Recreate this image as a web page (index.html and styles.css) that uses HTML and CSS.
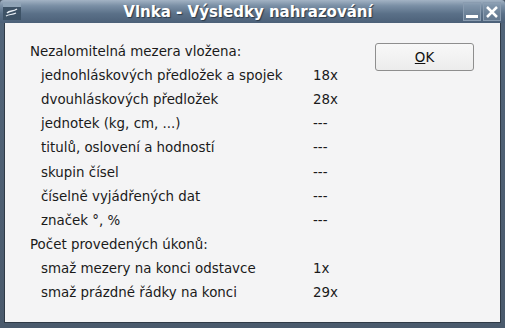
FILE: index.html
```html
<!DOCTYPE html>
<html lang="cs">
<head>
    <meta charset="UTF-8">
    <title>Vlnka - Výsledky nahrazování</title>
    <link rel="stylesheet" href="styles.css">
</head>
<body>
    <div class="window">
        <div class="titlebar">
            <div class="app-icon">
                <svg width="18" height="17" viewBox="0 0 18 17">
                    <rect x="0" y="0" width="18" height="17" fill="#3d5266"/>
                    <rect x="0" y="0" width="18" height="4" fill="#8fa3b6"/>
                    <path d="M4 10 C7 7 10 9 14 6" stroke="#e8eef4" stroke-width="1.5" fill="none"/>
                    <path d="M3 13 C6 11 9 12 13 10" stroke="#e8eef4" stroke-width="1.2" fill="none"/>
                </svg>
            </div>
            <div class="title">Vlnka - Výsledky nahrazování</div>
            <div class="win-buttons">
                <div class="win-btn">
                    <svg width="16" height="16" viewBox="0 0 16 16"><rect x="2" y="11" width="12" height="3" fill="#fff"/></svg>
                </div>
                <div class="win-btn">
                    <svg width="16" height="16" viewBox="0 0 16 16"><path d="M3 3 L13 13 M13 3 L3 13" stroke="#fff" stroke-width="2.5"/></svg>
                </div>
            </div>
        </div>
        <div class="content">
            <div class="results">
                <div class="row head">Nezalomitelná mezera vložena:</div>
                <div class="row"><span class="label">jednohláskových předložek a spojek</span><span class="value">18x</span></div>
                <div class="row"><span class="label">dvouhláskových předložek</span><span class="value">28x</span></div>
                <div class="row"><span class="label">jednotek (kg, cm, ...)</span><span class="value">---</span></div>
                <div class="row"><span class="label">titulů, oslovení a hodností</span><span class="value">---</span></div>
                <div class="row"><span class="label">skupin čísel</span><span class="value">---</span></div>
                <div class="row"><span class="label">číselně vyjádřených dat</span><span class="value">---</span></div>
                <div class="row"><span class="label">značek °, %</span><span class="value">---</span></div>
                <div class="row head">Počet provedených úkonů:</div>
                <div class="row"><span class="label">smaž mezery na konci odstavce</span><span class="value">1x</span></div>
                <div class="row"><span class="label">smaž prázdné řádky na konci</span><span class="value">29x</span></div>
            </div>
            <div class="side">
                <button class="ok-btn"><u>O</u>K</button>
            </div>
        </div>
    </div>
</body>
</html>
```

FILE: styles.css
```css
body {
    margin: 0;
    width: 505px;
    height: 328px;
    overflow: hidden;
    font-family: 'DejaVu Sans', Verdana, sans-serif;
    background: #4b5868;
}
.window {
    display: flex;
    flex-direction: column;
    height: 328px;
    box-sizing: border-box;
    padding: 0 4px 5px 4px;
    background: linear-gradient(to bottom, #52657a 0%, #4a5a6c 100%);
    border-radius: 4px 4px 0 0;
}
.titlebar {
    height: 23px;
    display: flex;
    align-items: center;
    margin: 0 -4px;
    padding: 0 4px 0 3px;
    background: linear-gradient(to bottom, #a3b3c4 0%, #7a8fa5 25%, #5a7088 60%, #4c6078 100%);
    border-radius: 4px 4px 0 0;
}
.app-icon {
    width: 18px;
    height: 17px;
    margin-top: -1px;
}
.title {
    flex: 1;
    text-align: center;
    color: #fff;
    font-weight: bold;
    font-size: 15px;
    text-shadow: 1px 1px 1px #2c3a48;
    padding-left: 12px;
}
.win-buttons {
    display: flex;
    gap: 2px;
}
.win-btn {
    width: 16px;
    height: 17px;
    border: 1px solid #8a9cb0;
    background: rgba(140,160,180,0.35);
    display: flex;
    align-items: center;
    justify-content: center;
}
.content {
    flex: 1;
    display: flex;
    background: #f4f4f5;
    border: 1px solid #2f3a46;
    border-top: none;
    padding: 16px 0 0 25px;
}
.results {
    width: 345px;
    font-size: 13.4px;
    color: #1a1a1a;
}
.row {
    display: flex;
    height: 24.2px;
    align-items: center;
}
.label {
    width: 272px;
    padding-left: 11px;
}
.value {
    flex: 1;
}
.side {
    padding-top: 4px;
}
.ok-btn {
    width: 99px;
    height: 28px;
    font-family: 'DejaVu Sans', Verdana, sans-serif;
    font-size: 13.4px;
    color: #111;
    background: linear-gradient(to bottom, #f8f8f8, #ececec);
    border: 1px solid #8e8e8e;
    border-radius: 3px;
}
```
